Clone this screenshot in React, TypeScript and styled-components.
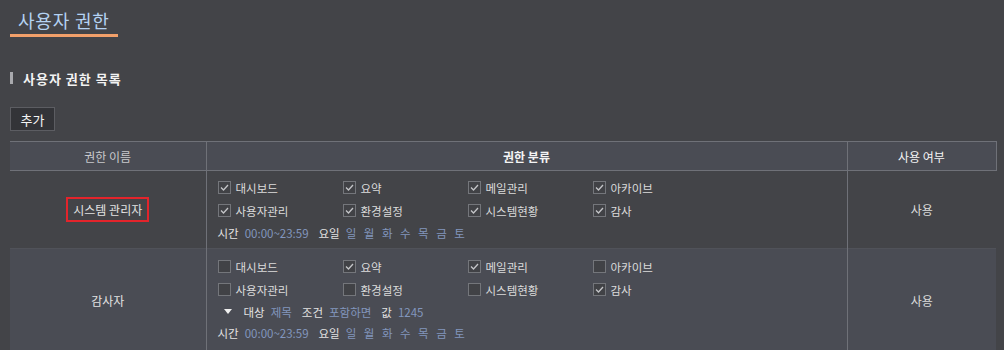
import React from 'react';
import styled, { createGlobalStyle } from 'styled-components';

const GlobalStyle = createGlobalStyle`
    html, body {
        margin: 0;
        padding: 0;
        background: #434448;
    }
    body {
        font-family: 'Noto Sans CJK KR', 'Noto Sans', sans-serif;
        color: #d8d8d8;
    }
`;

interface IPermission {
    label: string;
    checked: boolean;
}

interface IRole {
    name: string;
    highlighted?: boolean;
    permissions: IPermission[];
    condition?: { target: string; op: string; value: string };
    usage: string;
}

const DAYS = ['일', '월', '화', '수', '목', '금', '토'];

const roles: IRole[] = [
    {
        name: '시스템 관리자',
        highlighted: true,
        permissions: [
            { label: '대시보드', checked: true },
            { label: '요약', checked: true },
            { label: '메일관리', checked: true },
            { label: '아카이브', checked: true },
            { label: '사용자관리', checked: true },
            { label: '환경설정', checked: true },
            { label: '시스템현황', checked: true },
            { label: '감사', checked: true },
        ],
        usage: '사용',
    },
    {
        name: '감사자',
        permissions: [
            { label: '대시보드', checked: false },
            { label: '요약', checked: true },
            { label: '메일관리', checked: true },
            { label: '아카이브', checked: false },
            { label: '사용자관리', checked: false },
            { label: '환경설정', checked: false },
            { label: '시스템현황', checked: false },
            { label: '감사', checked: true },
        ],
        condition: { target: '제목', op: '포함하면', value: '1245' },
        usage: '사용',
    },
];

const Check: React.FC<{ checked: boolean }> = ({ checked }) => (
    <Box>
        {checked && (
            <svg width="11" height="11" viewBox="0 0 11 11">
                <path d="M2 5.5 L4.5 8 L9 3" fill="none" stroke="#c4c5c8" strokeWidth="1.3" />
            </svg>
        )}
    </Box>
);

const TimeLine: React.FC = () => (
    <InfoLine>
        <Label>시간</Label>
        <Value>00:00~23:59</Value>
        <Label>요일</Label>
        <Days>
            {DAYS.map(d => (
                <Value key={d}>{d}</Value>
            ))}
        </Days>
    </InfoLine>
);

export default function App() {
    return (
        <Page>
            <GlobalStyle />
            <Title>사용자 권한</Title>
            <SectionTitle>사용자 권한 목록</SectionTitle>
            <AddButton>추가</AddButton>
            <Table>
                <colgroup>
                    <col style={{ width: 196 }} />
                    <col style={{ width: 641 }} />
                    <col style={{ width: 149 }} />
                </colgroup>
                <thead>
                    <tr>
                        <Th>권한 이름</Th>
                        <Th bold>권한 분류</Th>
                        <Th light>사용 여부</Th>
                    </tr>
                </thead>
                <tbody>
                    {roles.map((role, i) => (
                        <Row key={role.name} alt={i % 2 === 1}>
                            <CenterCell>
                                <RoleName highlighted={role.highlighted}>{role.name}</RoleName>
                            </CenterCell>
                            <PermCell tall={!!role.condition}>
                                <PermGrid>
                                    {role.permissions.map(p => (
                                        <PermItem key={p.label}>
                                            <Check checked={p.checked} />
                                            {p.label}
                                        </PermItem>
                                    ))}
                                </PermGrid>
                                {role.condition && (
                                    <CondLine>
                                        <Triangle />
                                        <Label>대상</Label>
                                        <Value>{role.condition.target}</Value>
                                        <Label>조건</Label>
                                        <Value>{role.condition.op}</Value>
                                        <Label>값</Label>
                                        <Value>{role.condition.value}</Value>
                                    </CondLine>
                                )}
                                <TimeLine />
                            </PermCell>
                            <CenterCell>{role.usage}</CenterCell>
                        </Row>
                    ))}
                </tbody>
            </Table>
        </Page>
    );
}

const Page = styled.div`
    padding: 8px 8px 0 10px;
    min-height: 350px;
    box-sizing: border-box;
`;

const Title = styled.h1`
    display: inline-block;
    margin: 0;
    padding: 0 8px;
    height: 26px;
    line-height: 24px;
    font-size: 18px;
    font-weight: 400;
    letter-spacing: 0.8px;
    color: #b4d2f2;
    border-bottom: 3px solid #f2a06a;
`;

const SectionTitle = styled.h2`
    display: flex;
    align-items: center;
    gap: 10px;
    margin: 35px 0 0;
    height: 12px;
    font-size: 13px;
    font-weight: 700;
    letter-spacing: 1px;
    color: #f2f2f2;
    &::before {
        content: '';
        width: 3px;
        height: 12px;
        background: #a8a9ad;
    }
`;

const AddButton = styled.button`
    display: block;
    margin-top: 23px;
    width: 45px;
    height: 24px;
    padding: 0;
    font-family: inherit;
    font-size: 13px;
    color: #f4f4f4;
    background: #333438;
    border: 1px solid #5c5d62;
`;

const Table = styled.table`
    margin-top: 10px;
    width: 986px;
    border-collapse: collapse;
    table-layout: fixed;
    font-size: 11.5px;
`;

const Th = styled.th<{ bold?: boolean; light?: boolean }>`
    height: 28px;
    padding: 0;
    background: #4a4c54;
    border: 1px solid #6f7178;
    border-left: none;
    font-size: 12px;
    font-weight: ${p => (p.bold ? 700 : 400)};
    color: ${p => (p.bold || p.light ? '#f4f4f4' : '#c8c9cc')};
    &:not(:first-child) {
        border-left: 1px solid #6f7178;
    }
`;

const Row = styled.tr<{ alt: boolean }>`
    background: ${p => (p.alt ? '#4a4c54' : '#434448')};
    border-bottom: 1px solid #505259;
`;

const CenterCell = styled.td`
    padding: 0;
    text-align: center;
    vertical-align: middle;
    color: #dcdcdc;
    font-size: 12px;
    &:not(:first-child) {
        border-left: 1px solid #6f7178;
    }
`;

const PermCell = styled.td<{ tall: boolean }>`
    padding: ${p => (p.tall ? '6px 0 8px 11px' : '5px 0 4px 11px')};
    vertical-align: top;
    border-left: 1px solid #6f7178;
`;

const PermGrid = styled.div`
    display: grid;
    grid-template-columns: repeat(4, 125px);
    grid-auto-rows: 23px;
`;

const PermItem = styled.label`
    display: flex;
    align-items: center;
    gap: 5px;
    color: #dcdcdc;
    white-space: nowrap;
`;

const Box = styled.span`
    display: inline-flex;
    align-items: center;
    justify-content: center;
    width: 11px;
    height: 11px;
    border: 1px solid #74767b;
    background: #414246;
`;

const InfoLine = styled.div`
    display: flex;
    align-items: center;
    gap: 6px;
    height: 22px;
    color: #dcdcdc;
    white-space: nowrap;
`;

const CondLine = styled(InfoLine)`
    height: 21px;
    padding-left: 6px;
`;

const Triangle = styled.span`
    width: 0;
    height: 0;
    margin-right: 2px;
    border-left: 4px solid transparent;
    border-right: 4px solid transparent;
    border-top: 5px solid #f0f0f0;
`;

const Label = styled.span`
    color: #e2e2e2;
    margin-left: 4px;
    &:first-child {
        margin-left: 0;
    }
`;

const Value = styled.span`
    color: #8296bd;
`;

const Days = styled.span`
    display: inline-flex;
    gap: 7.5px;
`;

const RoleName = styled.span<{ highlighted?: boolean }>`
    display: inline-block;
    padding: 2px 5px;
    color: #e2e2e2;
    border: 2px solid ${p => (p.highlighted ? '#e3242b' : 'transparent')};
`;
